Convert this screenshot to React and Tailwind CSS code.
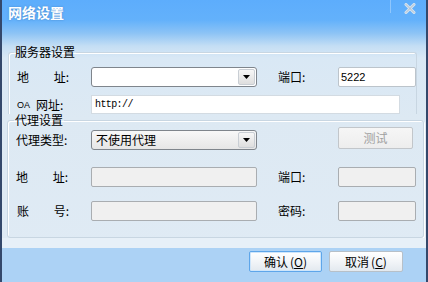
const font = "font-['Noto_Sans_CJK_SC','Noto_Sans',sans-serif]";

function Arrow() {
  return (
    <div className="flex h-full w-[17px] items-center justify-center rounded-[2px] border border-[#c9ced4] bg-gradient-to-b from-[#f7f7f7] to-[#dedede]">
      <svg width="7" height="4" viewBox="0 0 7 4">
        <path d="M0 0h7L3.5 4z" fill="#000" />
      </svg>
    </div>
  );
}

function Label({ a, b }) {
  return (
    <div className="flex w-[52px] items-center justify-between text-[12px] leading-[14px] text-black">
      <span>{a}</span>
      <span>{b}:</span>
    </div>
  );
}

function Field({ disabled, children, className = "" }) {
  return (
    <div
      className={
        "flex h-[20px] items-center rounded-[2px] border px-[2px] " +
        (disabled ? "border-[#a9adb1] bg-[#f0f0f0] " : "border-[#bcc4cb] bg-white ") +
        className
      }
    >
      {children}
    </div>
  );
}

function DlgButton({ label, hot, focused }) {
  return (
    <button
      type="button"
      className={
        "flex h-[21px] items-center justify-center rounded-[2px] border bg-gradient-to-b from-[#ffffff] via-[#f2f5f8] to-[#e3e9ef] text-[12px] leading-[14px] text-black " +
        (focused ? "w-[73px] border-[#5ea6ea] shadow-[inset_0_0_0_1px_#cfe6fb]" : "w-[74px] border-[#b7c0c8]")
      }
    >
      {label}
      <span className="ml-[2px]">(</span>
      <span className="underline">{hot}</span>
      <span>)</span>
    </button>
  );
}

export default function App() {
  return (
    <div
      className={
        font +
        " flex h-[282px] w-[428px] flex-col overflow-hidden border-x-2 border-[#34486b] bg-[linear-gradient(180deg,#5dadfc_0px,#63b1fb_20px,#8cc3f5_33px,#c4def4_46px,#d9e8f5_58px,#dde9f3_120px,#e0ebf5_100%)]"
      }
    >
      {/* title bar */}
      <div className="flex h-[45px] shrink-0 items-start justify-between">
        <div className="ml-[6px] mt-[3px] text-[14px] font-bold leading-[18px] text-white [text-shadow:0_0_2px_rgba(40,90,150,0.5)]">
          网络设置
        </div>
        <div className="mr-[10px] flex items-start gap-[13px]">
          <div className="h-[13px] w-px bg-white/30" />
          <svg width="12" height="11" viewBox="0 0 12 11" className="mt-[3px]">
            <path d="M2 1.5l8 8M10 1.5l-8 8" stroke="#d8e4ef" strokeWidth="3" strokeLinecap="round" />
            <path d="M2 1.5l8 8M10 1.5l-8 8" stroke="#a9bccf" strokeWidth="1" strokeLinecap="round" />
          </svg>
        </div>
      </div>

      {/* server group */}
      <fieldset className="ml-[6px] w-[408px] shrink-0 rounded-t-[3px] border border-b-0 border-[#c8d6e2] p-0 pb-0 shadow-[inset_1px_1px_0_#ffffff]">
        <legend className="ml-[5px] px-[1px] text-[12px] leading-[14px] text-black">服务器设置</legend>
        <div className="mt-[8px] flex h-[20px] items-center pl-[8px]">
          <div className="w-[74px]">
            <Label a="地" b="址" />
          </div>
          <div className="flex h-[20px] w-[166px] justify-end rounded-[3px] border border-[#7f858c] bg-white p-px">
            <Arrow />
          </div>
          <div className="ml-[21px] w-[60px] text-[12px] leading-[14px]">端口:</div>
          <Field className="w-[78px]">
            <span className="font-['Liberation_Sans',sans-serif] text-[11px] leading-[13px]">5222</span>
          </Field>
        </div>
        <div className="mt-[8px] flex h-[19px] items-center pl-[8px]">
          <div className="flex w-[74px] items-center text-[12px] leading-[14px]">
            <span className="font-['Liberation_Sans',sans-serif] text-[9px] leading-[10px]">OA</span>
            <span className="ml-[6px]">网址:</span>
          </div>
          <div className="flex h-[19px] w-[309px] items-center border border-[#d3dbe2] bg-white px-[3px]">
            <span className="font-['Liberation_Mono',monospace] text-[10px] tracking-[-0.6px] leading-[12px]">http://</span>
          </div>
        </div>
      </fieldset>

      {/* proxy group */}
      <fieldset className="-mt-px ml-[5px] w-[417px] shrink-0 rounded-[3px] border border-[#c8d6e2] p-0 pb-[16px] shadow-[inset_1px_1px_0_#ffffff,1px_1px_0_#ffffff]">
        <legend className="ml-[6px] px-[1px] text-[12px] leading-[14px] text-black">代理设置</legend>
        <div className="flex h-[23px] items-start pl-[8px]">
          <div className="mt-[3px] flex h-[20px] w-[75px] items-center text-[12px] leading-[14px]">代理类型:</div>
          <div className="mt-[3px] flex h-[20px] w-[166px] items-center rounded-[3px] border border-[#7f858c] bg-gradient-to-b from-[#f8f8f8] to-[#e6e6e6] p-px">
            <span className="flex-1 pl-[3px] text-[12px] leading-[14px]">不使用代理</span>
            <Arrow />
          </div>
          <button
            type="button"
            className="ml-[81px] flex h-[22px] w-[75px] items-center justify-center rounded-[2px] border border-[#c2c6ca] bg-gradient-to-b from-[#f6f6f6] to-[#ededed] text-[12px] leading-[14px] text-[#a0a0a0]"
          >
            测试
          </button>
        </div>
        <div className="mt-[17px] flex h-[20px] items-center pl-[8px]">
          <div className="w-[75px]">
            <Label a="地" b="址" />
          </div>
          <Field disabled className="w-[166px]" />
          <div className="ml-[21px] w-[60px] text-[12px] leading-[14px]">端口:</div>
          <Field disabled className="w-[78px]" />
        </div>
        <div className="mt-[14px] flex h-[20px] items-center pl-[9px]">
          <div className="w-[74px]">
            <Label a="账" b="号" />
          </div>
          <Field disabled className="w-[166px]" />
          <div className="ml-[21px] w-[60px] text-[12px] leading-[14px]">密码:</div>
          <Field disabled className="w-[78px]" />
        </div>
      </fieldset>

      <div className="h-[10px] shrink-0 bg-[#e7f0f8]" />

      {/* button bar */}
      <div className="flex flex-1 items-start gap-[7px] bg-[#acd2f5] pl-[247px] pt-[3px]">
        <DlgButton label="确认" hot="O" focused />
        <DlgButton label="取消" hot="C" />
      </div>
    </div>
  );
}
